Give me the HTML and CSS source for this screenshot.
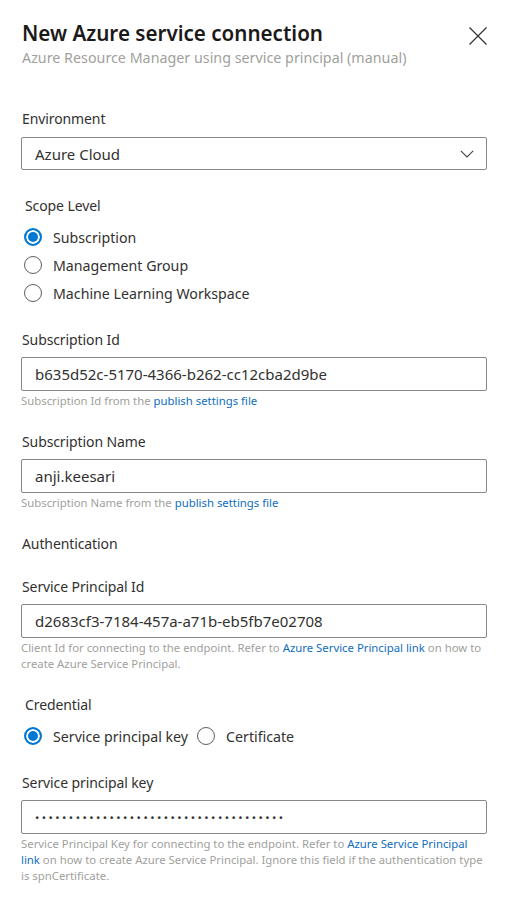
FILE: index.html
```html
<!DOCTYPE html>
<html lang="en">
<head>
<meta charset="utf-8">
<title>New Azure service connection</title>
<link rel="stylesheet" href="styles.css">
</head>
<body>
<div class="panel">
  <header class="header">
    <div class="titles">
      <h1 class="title">New Azure service connection</h1>
      <div class="subtitle">Azure Resource Manager using service principal (manual)</div>
    </div>
    <button class="close" aria-label="Close">
      <svg width="20" height="20" viewBox="0 0 20 20"><path d="M1.5 1.5 L18.5 18.5 M18.5 1.5 L1.5 18.5" stroke="#333" stroke-width="1.2" fill="none"/></svg>
    </button>
  </header>

  <section class="field first">
    <div class="label">Environment</div>
    <div class="input select">
      <span>Azure Cloud</span>
      <svg class="chev" width="14" height="8" viewBox="0 0 14 8"><path d="M0.8 0.8 L7 7 L13.2 0.8" stroke="#444" stroke-width="1.1" fill="none"/></svg>
    </div>
  </section>

  <section class="field group">
    <div class="label indent">Scope Level</div>
    <div class="radios">
      <div class="radio-row"><span class="radio on"></span><span>Subscription</span></div>
      <div class="radio-row"><span class="radio"></span><span>Management Group</span></div>
      <div class="radio-row"><span class="radio"></span><span>Machine Learning Workspace</span></div>
    </div>
  </section>

  <section class="field">
    <div class="label">Subscription Id</div>
    <div class="input">b635d52c-5170-4366-b262-cc12cba2d9be</div>
    <div class="help">Subscription Id from the <a class="link">publish settings file</a></div>
  </section>

  <section class="field">
    <div class="label">Subscription Name</div>
    <div class="input">anji.keesari</div>
    <div class="help">Subscription Name from the <a class="link">publish settings file</a></div>
  </section>

  <section class="field">
    <div class="label">Authentication</div>
  </section>

  <section class="field">
    <div class="label">Service Principal Id</div>
    <div class="input">d2683cf3-7184-457a-a71b-eb5fb7e02708</div>
    <div class="help">Client Id for connecting to the endpoint. Refer to <a class="link">Azure Service Principal link</a> on how to create Azure Service Principal.</div>
  </section>

  <section class="field">
    <div class="label indent">Credential</div>
    <div class="radios inline">
      <div class="radio-row"><span class="radio on"></span><span>Service principal key</span></div>
      <div class="radio-row"><span class="radio"></span><span>Certificate</span></div>
    </div>
  </section>

  <section class="field">
    <div class="label">Service principal key</div>
    <div class="input dots">•••••••••••••••••••••••••••••••••••••</div>
    <div class="help">Service Principal Key for connecting to the endpoint. Refer to <a class="link">Azure Service Principal link</a> on how to create Azure Service Principal. Ignore this field if the authentication type is spnCertificate.</div>
  </section>
</div>
</body>
</html>
```

FILE: styles.css
```css
* { box-sizing: border-box; }
html, body { margin: 0; padding: 0; background: #fff; }
body {
  font-family: "Noto Sans", "Open Sans", "Liberation Sans", sans-serif;
  color: #323130;
  font-size: 14px;
}
.panel {
  width: 510px;
  padding: 19px 23px 0 21px;
}
.header {
  display: flex;
  justify-content: space-between;
  align-items: flex-start;
}
.title {
  margin: 0 0 0 1px;
  font-size: 20.6px;
  line-height: 28px;
  font-weight: 600;
  color: #1b1a19;
}
.subtitle {
  margin: 1px 0 0 1px;
  font-size: 14.3px;
  line-height: 20px;
  color: #a19f9d;
}
.close {
  border: 0;
  background: none;
  padding: 0;
  margin: 7px -1px 0 0;
  width: 20px;
  height: 20px;
  display: flex;
}
.field { margin-top: 23px; }
.field.first { margin-top: 41px; }
.field.group { margin-top: 26px; }
.label {
  font-size: 14px;
  line-height: 20px;
  color: #323130;
  margin-left: 1px;
  letter-spacing: -0.1px;
}
.label.indent { margin-left: 4px; }
.input {
  margin-top: 7px;
  height: 34px;
  border: 1px solid #8a8886;
  border-radius: 2px;
  padding: 0 12px 0 13px;
  display: flex;
  align-items: center;
  font-size: 15px;
  color: #323130;
}
.select {
  margin-top: 8px;
  height: 33px;
  justify-content: space-between;
}
.dots {
  font-size: 11.5px;
  letter-spacing: 2.45px;
  color: #323130;
}
.help {
  margin-top: 2px;
  font-size: 11.35px;
  line-height: 16px;
  color: #a19f9d;
}
.link { color: #106ebe; text-decoration: none; }
.radios { margin-top: 7px; }
.radios.inline { display: flex; gap: 9px; }
.radio-row {
  display: flex;
  align-items: center;
  height: 28px;
  gap: 11px;
  padding-left: 3px;
  font-size: 14.2px;
}
.radios.inline .radio-row:last-child { padding-left: 0; gap: 11px; }
.radio {
  width: 18px;
  height: 18px;
  border-radius: 50%;
  border: 1px solid #605e5c;
  flex: none;
  background: #fff;
}
.radio.on {
  border: 2px solid #0078d4;
  background: #0078d4;
  box-shadow: inset 0 0 0 2px #fff;
}
```
